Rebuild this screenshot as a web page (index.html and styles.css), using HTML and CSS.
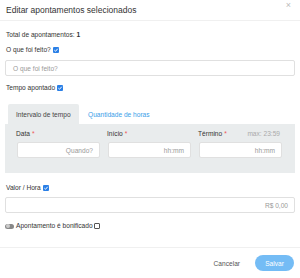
FILE: index.html
```html
<!DOCTYPE html>
<html lang="pt-BR">
<head>
<meta charset="utf-8">
<link rel="stylesheet" href="styles.css">
</head>
<body>
<div class="modal">
  <div class="header">
    <span class="title">Editar apontamentos selecionados</span>
    <span class="close">×</span>
  </div>
  <div class="content">
    <div class="row total">Total de apontamentos: <b>1</b></div>
    <div class="row label-row first">O que foi feito? <span class="cb on"><svg viewBox="0 0 8 8"><path d="M1.8 4.2 L3.4 5.7 L6.3 2.3" fill="none" stroke="#fff" stroke-width="1.3"/></svg></span></div>
    <div class="input">O que foi feito?</div>
    <div class="row label-row tempo">Tempo apontado <span class="cb on"><svg viewBox="0 0 8 8"><path d="M1.8 4.2 L3.4 5.7 L6.3 2.3" fill="none" stroke="#fff" stroke-width="1.3"/></svg></span></div>
    <div class="tabs">
      <div class="tab active">Intervalo de tempo</div>
      <div class="tab link">Quantidade de horas</div>
    </div>
    <div class="panel">
      <div class="col">
        <div class="plabel">Data <span class="req">*</span></div>
        <div class="input right">Quando?</div>
      </div>
      <div class="col">
        <div class="plabel">Início <span class="req">*</span></div>
        <div class="input right">hh:mm</div>
      </div>
      <div class="col">
        <div class="plabel">Término <span class="req">*</span><span class="max">max: 23:59</span></div>
        <div class="input right">hh:mm</div>
      </div>
    </div>
    <div class="row label-row valor">Valor / Hora <span class="cb on"><svg viewBox="0 0 8 8"><path d="M1.8 4.2 L3.4 5.7 L6.3 2.3" fill="none" stroke="#fff" stroke-width="1.3"/></svg></span></div>
    <div class="input right tight">R$ 0,00</div>
    <div class="row bonus"><span class="toggle"><span class="knob"></span></span>Apontamento é bonificado <span class="cb off"></span></div>
  </div>
  <div class="footer">
    <span class="cancel">Cancelar</span>
    <span class="save">Salvar</span>
  </div>
</div>
</body>
</html>
```
FILE: styles.css
```css
* { box-sizing: border-box; }
html, body { margin: 0; padding: 0; background: #fff; }
body {
  font-family: "Liberation Sans", Arial, sans-serif;
  color: #333;
  width: 300px;
  height: 278px;
  overflow: hidden;
}
.modal { width: 300px; }
.header {
  height: 21px;
  padding: 0 6px;
  display: flex;
  align-items: center;
  justify-content: space-between;
  border-bottom: 1px solid #f0f0f0;
}
.title { font-size: 8.5px; color: #333; }
.close { font-size: 9px; color: #bbb; line-height: 1; margin-top: -10px; margin-right: 3px; }
.content { padding: 9px 5px 0 5px; }
.row {
  height: 10px;
  line-height: 10px;
  font-size: 6.6px;
  display: flex;
  align-items: center;
  padding-left: 1px;
}
.total b { font-weight: bold; margin-left: 2px; }
.label-row.first { margin-top: 5px; }
.cb {
  display: inline-block;
  width: 6px;
  height: 6px;
  margin-left: 2px;
  border-radius: 1px;
}
.cb svg { display: block; width: 6px; height: 6px; }
.cb.on { background: #2a7fe6; }
.cb.off { border: 0.8px solid #555; background: #fff; width: 6px; height: 6px; margin-left: 1px; }
.input {
  height: 16px;
  border: 1px solid #e0e0e0;
  border-radius: 2px;
  background: #fff;
  font-size: 6.6px;
  color: #999;
  display: flex;
  align-items: center;
  padding: 0 7px;
  margin-top: 5px;
}
.input.right { justify-content: flex-end; padding-right: 6px; }
.input.tight { margin-top: 4px; }
.label-row.tempo { margin-top: 7px; }
.tabs {
  display: flex;
  margin-top: 11px;
  padding-left: 3px;
  height: 20px;
}
.tab {
  height: 20px;
  display: flex;
  align-items: center;
  padding: 0 8px;
  font-size: 6.6px;
}
.tab.active { background: #e9eced; color: #444; border-radius: 2px 2px 0 0; width: 71px; }
.tab.link { color: #3a9ee8; padding-left: 9px; }
.panel {
  background: #e9eced;
  height: 49px;
  padding: 5px 12px 0 12px;
  display: grid;
  grid-template-columns: 83px 83px 83px;
  column-gap: 8px;
}
.panel .input { margin-top: 3px; }
.plabel {
  height: 10px;
  line-height: 10px;
  font-size: 6.6px;
  color: #333;
  display: flex;
  align-items: center;
  margin-left: -1px;
}
.req { color: #e55; margin-left: 2px; }
.max { margin-left: auto; color: #aaa; margin-right: 2px; }
.label-row.valor { margin-top: 10px; }
.bonus { margin-top: 8px; padding-left: 0; }
.toggle {
  display: inline-block;
  width: 9px;
  height: 5px;
  border-radius: 3px;
  background: #888;
  position: relative;
  margin-right: 2px;
}
.knob {
  position: absolute;
  left: 0.5px;
  top: 0.5px;
  width: 4px;
  height: 4px;
  border-radius: 50%;
  background: #ccc;
}
.footer {
  margin-top: 16px;
  border-top: 1px solid #f0f0f0;
  height: 31px;
  display: flex;
  align-items: center;
  justify-content: flex-end;
  padding-right: 6px;
}
.cancel { font-size: 6.6px; color: #555; margin-right: 15px; }
.save {
  width: 39px;
  height: 16px;
  border-radius: 8px;
  background: #74bcf5;
  color: #fff;
  font-size: 6.6px;
  display: flex;
  align-items: center;
  justify-content: center;
}
```
